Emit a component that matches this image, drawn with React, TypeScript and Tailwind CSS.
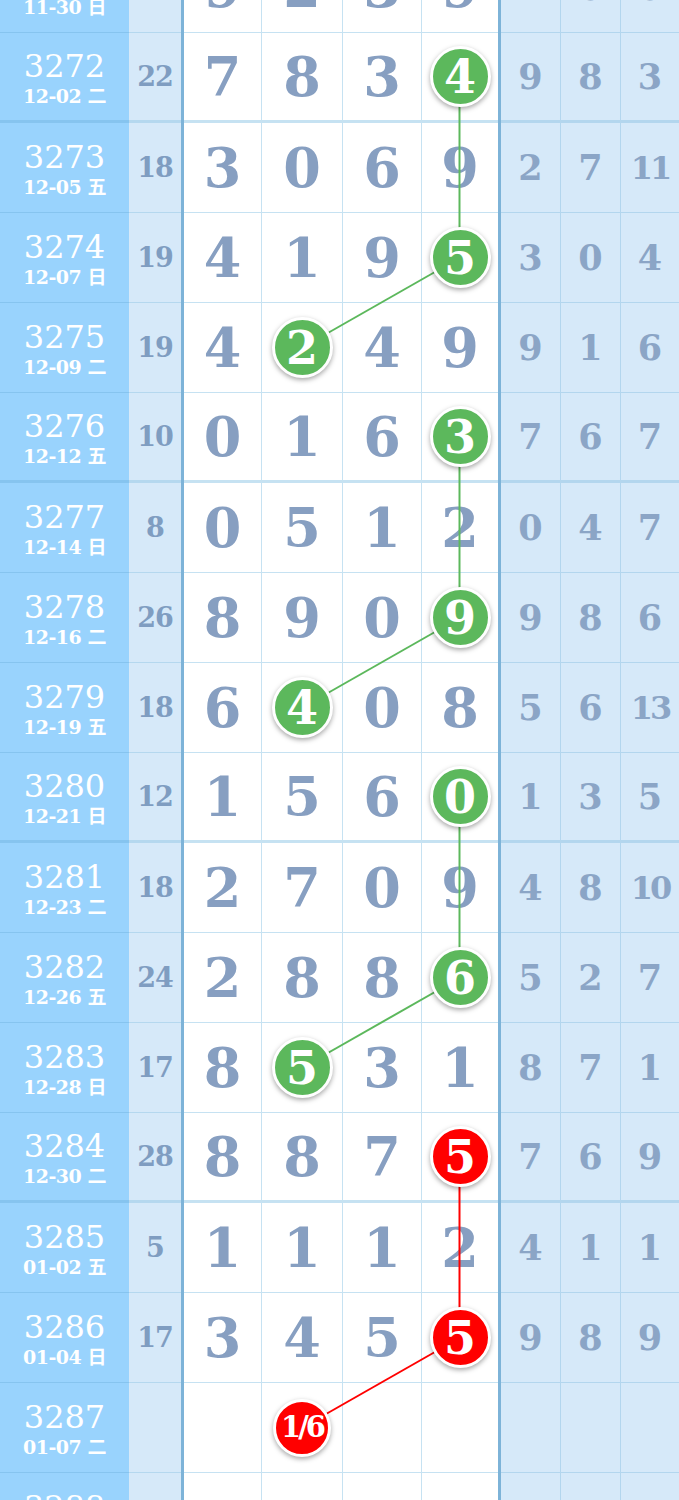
import React from "react";

type Ball = { col: number; text: string; color: "g" | "r" };
type Row = {
  id: string;
  date: string;
  wd: string;
  sum: string;
  main: string[];
  right: string[];
  ball?: Ball;
  thick?: boolean;
};

const rows: Row[] = [
  { id: "3271", date: "11-30", wd: "日", sum: "", main: ["9", "2", "3", "9"], right: ["1", "0", "0"] },
  { id: "3272", date: "12-02", wd: "二", sum: "22", main: ["7", "8", "3", ""], right: ["9", "8", "3"], ball: { col: 3, text: "4", color: "g" }, thick: true },
  { id: "3273", date: "12-05", wd: "五", sum: "18", main: ["3", "0", "6", "9"], right: ["2", "7", "11"] },
  { id: "3274", date: "12-07", wd: "日", sum: "19", main: ["4", "1", "9", ""], right: ["3", "0", "4"], ball: { col: 3, text: "5", color: "g" } },
  { id: "3275", date: "12-09", wd: "二", sum: "19", main: ["4", "", "4", "9"], right: ["9", "1", "6"], ball: { col: 1, text: "2", color: "g" } },
  { id: "3276", date: "12-12", wd: "五", sum: "10", main: ["0", "1", "6", ""], right: ["7", "6", "7"], ball: { col: 3, text: "3", color: "g" }, thick: true },
  { id: "3277", date: "12-14", wd: "日", sum: "8", main: ["0", "5", "1", "2"], right: ["0", "4", "7"] },
  { id: "3278", date: "12-16", wd: "二", sum: "26", main: ["8", "9", "0", ""], right: ["9", "8", "6"], ball: { col: 3, text: "9", color: "g" } },
  { id: "3279", date: "12-19", wd: "五", sum: "18", main: ["6", "", "0", "8"], right: ["5", "6", "13"], ball: { col: 1, text: "4", color: "g" } },
  { id: "3280", date: "12-21", wd: "日", sum: "12", main: ["1", "5", "6", ""], right: ["1", "3", "5"], ball: { col: 3, text: "0", color: "g" }, thick: true },
  { id: "3281", date: "12-23", wd: "二", sum: "18", main: ["2", "7", "0", "9"], right: ["4", "8", "10"] },
  { id: "3282", date: "12-26", wd: "五", sum: "24", main: ["2", "8", "8", ""], right: ["5", "2", "7"], ball: { col: 3, text: "6", color: "g" } },
  { id: "3283", date: "12-28", wd: "日", sum: "17", main: ["8", "", "3", "1"], right: ["8", "7", "1"], ball: { col: 1, text: "5", color: "g" } },
  { id: "3284", date: "12-30", wd: "二", sum: "28", main: ["8", "8", "7", ""], right: ["7", "6", "9"], ball: { col: 3, text: "5", color: "r" }, thick: true },
  { id: "3285", date: "01-02", wd: "五", sum: "5", main: ["1", "1", "1", "2"], right: ["4", "1", "1"] },
  { id: "3286", date: "01-04", wd: "日", sum: "17", main: ["3", "4", "5", ""], right: ["9", "8", "9"], ball: { col: 3, text: "5", color: "r" } },
  { id: "3287", date: "01-07", wd: "二", sum: "", main: ["", "", "", ""], right: ["", "", ""], ball: { col: 1, text: "1/6", color: "r" } },
  { id: "3288", date: "01-09", wd: "五", sum: "", main: ["", "", "", ""], right: ["", "", ""] },
];

const mainW = ["w-[77px]", "w-[81px] border-l", "w-[79px] border-l", "w-[77px] border-l"];
const rightW = ["w-[59px]", "w-[60px] border-l", "w-[59px] border-l"];

const serif = "font-['DejaVu_Serif','Noto_Sans_CJK_SC',serif]";

const cx = (col: number) => (col === 1 ? 301.5 : 459.5);
const cy = (r: number) => 45 + 90 * r;

const greenLines: [number, number, number, number][] = [
  [cx(3), cy(1), cx(3), cy(3)],
  [cx(3), cy(3), cx(1), cy(4)],
  [cx(3), cy(5), cx(3), cy(7)],
  [cx(3), cy(7), cx(1), cy(8)],
  [cx(3), cy(9), cx(3), cy(11)],
  [cx(3), cy(11), cx(1), cy(12)],
];
const redLines: [number, number, number, number][] = [
  [cx(3), cy(13), cx(3), cy(15)],
  [cx(3), cy(15), cx(1), cy(16)],
];

function BallView({ b }: { b: Ball }) {
  const bg = b.color === "g" ? "bg-[#5cb85c]" : "bg-[#ff0000]";
  const small = b.text.length > 1;
  return (
    <div
      className={`relative z-20 flex items-center justify-center rounded-full border-[3px] border-white ${bg} shadow-[0_2px_5px_rgba(0,0,0,0.35)] ${
        small ? "h-[58px] w-[58px]" : "h-[61px] w-[61px]"
      }`}
    >
      <span
        className={`${serif} font-bold leading-none text-white ${
          small ? "text-[29px] tracking-[-3px]" : "text-[46px]"
        }`}
      >
        {b.text}
      </span>
    </div>
  );
}

export default function App() {
  return (
    <div className="h-[1500px] w-[679px] overflow-hidden bg-white">
      <div className="relative -mt-[57px]">
        <svg
          className="pointer-events-none absolute left-0 top-0 z-10"
          width={679}
          height={1620}
        >
          {greenLines.map((l, i) => (
            <line key={"g" + i} x1={l[0]} y1={l[1]} x2={l[2]} y2={l[3]} stroke="#5cb85c" strokeWidth={2} />
          ))}
          {redLines.map((l, i) => (
            <line key={"r" + i} x1={l[0]} y1={l[1]} x2={l[2]} y2={l[3]} stroke="#ff0000" strokeWidth={2} />
          ))}
        </svg>
        {rows.map((row) => {
          const bb = row.thick ? "border-b-[3px]" : "border-b";
          return (
            <div key={row.id} className="flex h-[90px]">
              <div
                className={`flex w-[129px] flex-col items-center justify-center bg-[#99d3fd] ${bb} border-[#86c4ef] pt-[2px] text-white`}
              >
                <div className={`${serif} text-[32px] leading-none`}>{row.id}</div>
                <div className={`${serif} mt-[5px] text-[19px] font-semibold leading-none tracking-[-0.5px]`}>
                  {row.date} {row.wd}
                </div>
              </div>
              <div
                className={`flex w-[52px] items-center justify-center bg-[#d6e9f9] ${bb} border-[#b5d8ef]`}
              >
                <span className={`${serif} text-[27px] font-bold leading-none tracking-[-1px] text-[#7f9dc1]`}>{row.sum}</span>
              </div>
              <div className="w-[3px] bg-[#7db3d8]" />
              {row.main.map((d, i) => (
                <div
                  key={i}
                  className={`flex ${mainW[i]} items-center justify-center bg-white ${bb} border-[#c6e2f2]`}
                >
                  {row.ball && row.ball.col === i ? (
                    <BallView b={row.ball} />
                  ) : (
                    <span className={`${serif} text-[54px] font-bold leading-none text-[#879fc1]`}>{d}</span>
                  )}
                </div>
              ))}
              <div className="w-[3px] bg-[#7db3d8]" />
              {row.right.map((d, i) => (
                <div
                  key={i}
                  className={`flex ${rightW[i]} items-center justify-center bg-[#d6e9f9] ${bb} border-[#b3d6ee]`}
                >
                  <span
                    className={`${serif} font-bold leading-none text-[#8ba5c6] ${
                      d.length > 1 ? "text-[32px] tracking-[-3px]" : "text-[35px]"
                    }`}
                  >
                    {d}
                  </span>
                </div>
              ))}
            </div>
          );
        })}
      </div>
    </div>
  );
}
